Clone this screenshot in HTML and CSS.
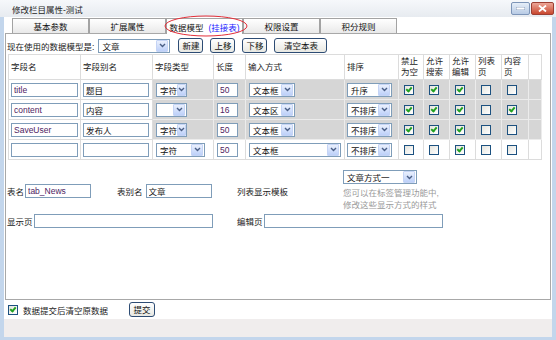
FILE: index.html
```html
<!doctype html>
<html lang="zh">
  <head>
    <meta charset="UTF-8" />
    <title>修改栏目属性-测试</title>
    <link rel="stylesheet" href="styles.css">
  </head>
  <body>
    <div class="window">
      <div class="titlebar">
        <span class="title">修改栏目属性-测试</span>
        <div class="win-btns">
          <span class="win-min"><svg width="9" height="3" viewBox="0 0 9 3"><rect x="0" y="0" width="9" height="3" fill="#fff" stroke="#56709a" stroke-width="0.6"/></svg></span>
          <span class="win-close"><svg width="9" height="7" viewBox="0 0 9 7"><path d="M1 0.5 L8 6.5 M8 0.5 L1 6.5" stroke="#fff" stroke-width="1.8"/></svg></span>
        </div>
      </div>

      <div class="client">
        <div class="tabs">
          <span class="tab">基本参数</span>
          <span class="tab">扩展属性</span>
          <span class="tab active">数据模型 <span class="tab-link">(挂接表)</span>
            <svg class="ring" width="84" height="22" viewBox="0 0 84 22"><ellipse cx="42" cy="11" rx="41" ry="10" fill="none" stroke="#e3303a" stroke-width="1"/></svg>
          </span>
          <span class="tab">权限设置</span>
          <span class="tab">积分规则</span>
        </div>

        <div class="panel">
          <div class="toolbar">
            <span>现在使用的数据模型是:</span>
            <span class="sel sel-model">文章<span class="sel-btn"><svg width="7" height="5" viewBox="0 0 7 5"><path d="M1 1 L3.5 3.5 L6 1" fill="none" stroke="#4a5f86" stroke-width="1.4"/></svg></span></span>
            <button class="btn">新建</button>
            <button class="btn">上移</button>
            <button class="btn">下移</button>
            <button class="btn btn-wide">清空本表</button>
          </div>

          <table class="fields">
            <colgroup>
              <col style="width:72px"><col style="width:72px"><col style="width:61px"><col style="width:32px">
              <col style="width:99px"><col style="width:54px"><col style="width:25px"><col style="width:26px">
              <col style="width:26px"><col style="width:26px"><col style="width:27px"><col style="width:13px">
            </colgroup>
            <tr class="head">
              <td>字段名</td><td>字段别名</td><td>字段类型</td><td>长度</td><td>输入方式</td><td>排序</td>
              <td>禁止<br>为空</td><td>允许<br>搜索</td><td>允许<br>编辑</td><td>列表<br>页</td><td>内容<br>页</td><td></td>
            </tr>
            <tr class="fill">
              <td><input class="txt w-name" value="title"></td>
              <td><input class="txt w-alias cjk" value="题目"></td>
              <td><span class="sel w-type">字符<span class="sel-btn"><svg width="7" height="5" viewBox="0 0 7 5"><path d="M1 1 L3.5 3.5 L6 1" fill="none" stroke="#4a5f86" stroke-width="1.4"/></svg></span></span></td>
              <td><input class="txt w-len" value="50"></td>
              <td><span class="sel w-input">文本框<span class="sel-btn"><svg width="7" height="5" viewBox="0 0 7 5"><path d="M1 1 L3.5 3.5 L6 1" fill="none" stroke="#4a5f86" stroke-width="1.4"/></svg></span></span></td>
              <td><span class="sel w-sort">升序<span class="sel-btn"><svg width="7" height="5" viewBox="0 0 7 5"><path d="M1 1 L3.5 3.5 L6 1" fill="none" stroke="#4a5f86" stroke-width="1.4"/></svg></span></span></td>
              <td><span class="chk on"></span></td><td><span class="chk on"></span></td><td><span class="chk on"></span></td>
              <td><span class="chk"></span></td><td><span class="chk"></span></td><td></td>
            </tr>
            <tr class="fill">
              <td><input class="txt w-name" value="content"></td>
              <td><input class="txt w-alias cjk" value="内容"></td>
              <td><span class="sel w-type"><span class="sel-btn"><svg width="7" height="5" viewBox="0 0 7 5"><path d="M1 1 L3.5 3.5 L6 1" fill="none" stroke="#4a5f86" stroke-width="1.4"/></svg></span></span></td>
              <td><input class="txt w-len" value="16"></td>
              <td><span class="sel w-input">文本区<span class="sel-btn"><svg width="7" height="5" viewBox="0 0 7 5"><path d="M1 1 L3.5 3.5 L6 1" fill="none" stroke="#4a5f86" stroke-width="1.4"/></svg></span></span></td>
              <td><span class="sel w-sort">不排序<span class="sel-btn"><svg width="7" height="5" viewBox="0 0 7 5"><path d="M1 1 L3.5 3.5 L6 1" fill="none" stroke="#4a5f86" stroke-width="1.4"/></svg></span></span></td>
              <td><span class="chk on"></span></td><td><span class="chk on"></span></td><td><span class="chk on"></span></td>
              <td><span class="chk"></span></td><td><span class="chk on"></span></td><td></td>
            </tr>
            <tr class="fill">
              <td><input class="txt w-name" value="SaveUser"></td>
              <td><input class="txt w-alias cjk" value="发布人"></td>
              <td><span class="sel w-type">字符<span class="sel-btn"><svg width="7" height="5" viewBox="0 0 7 5"><path d="M1 1 L3.5 3.5 L6 1" fill="none" stroke="#4a5f86" stroke-width="1.4"/></svg></span></span></td>
              <td><input class="txt w-len" value="50"></td>
              <td><span class="sel w-input">文本框<span class="sel-btn"><svg width="7" height="5" viewBox="0 0 7 5"><path d="M1 1 L3.5 3.5 L6 1" fill="none" stroke="#4a5f86" stroke-width="1.4"/></svg></span></span></td>
              <td><span class="sel w-sort">不排序<span class="sel-btn"><svg width="7" height="5" viewBox="0 0 7 5"><path d="M1 1 L3.5 3.5 L6 1" fill="none" stroke="#4a5f86" stroke-width="1.4"/></svg></span></span></td>
              <td><span class="chk on"></span></td><td><span class="chk on"></span></td><td><span class="chk on"></span></td>
              <td><span class="chk"></span></td><td><span class="chk"></span></td><td></td>
            </tr>
            <tr>
              <td><input class="txt w-name" value=""></td>
              <td><input class="txt w-alias" value=""></td>
              <td><span class="sel w-type-wide">字符<span class="sel-btn"><svg width="7" height="5" viewBox="0 0 7 5"><path d="M1 1 L3.5 3.5 L6 1" fill="none" stroke="#4a5f86" stroke-width="1.4"/></svg></span></span></td>
              <td><input class="txt w-len" value="50"></td>
              <td><span class="sel w-input-wide">文本框<span class="sel-btn"><svg width="7" height="5" viewBox="0 0 7 5"><path d="M1 1 L3.5 3.5 L6 1" fill="none" stroke="#4a5f86" stroke-width="1.4"/></svg></span></span></td>
              <td><span class="sel w-sort">不排序<span class="sel-btn"><svg width="7" height="5" viewBox="0 0 7 5"><path d="M1 1 L3.5 3.5 L6 1" fill="none" stroke="#4a5f86" stroke-width="1.4"/></svg></span></span></td>
              <td><span class="chk"></span></td><td><span class="chk"></span></td><td><span class="chk on"></span></td>
              <td><span class="chk"></span></td><td><span class="chk"></span></td><td></td>
            </tr>
          </table>

          <div class="meta">
            <div class="meta-row row-a">
              <div class="cell-a">
                <span>表名</span><input class="txt w-tbl" value="tab_News">
                <span class="lbl-alias">表别名</span><input class="txt w-tbl cjk" value="文章">
              </div>
              <div class="cell-b">列表显示模板</div>
              <div class="cell-c">
                <span class="sel w-tpl">文章方式一<span class="sel-btn"><svg width="7" height="5" viewBox="0 0 7 5"><path d="M1 1 L3.5 3.5 L6 1" fill="none" stroke="#4a5f86" stroke-width="1.4"/></svg></span></span>
                <div class="hint">您可以在标签管理功能中,<br>修改这些显示方式的样式</div>
              </div>
            </div>
            <div class="meta-row row-b">
              <div class="cell-a"><span>显示页</span><input class="txt w-page" value=""></div>
              <div class="cell-edit"><span>编辑页</span><input class="txt w-page" value=""></div>
            </div>
          </div>
        </div>

        <div class="footer">
          <span class="chk on"></span>
          <span class="footer-text">数据提交后清空原数据</span>
          <button class="btn btn-submit">提交</button>
        </div>
      </div>
      <div class="statusbar"></div>
    </div>
  </body>
</html>
```

FILE: styles.css
```css
body {
  margin: 0;
  font-family: "Liberation Sans", "Noto Sans CJK SC", sans-serif;
  font-size: 8.5px;
  color: #1a1a1a;
}

.window {
  width: 556px;
  height: 340px;
  background-color: #c3d6ec;
  display: flex;
  flex-direction: column;
}

/* title bar */
.titlebar {
  height: 17px;
  flex: none;
  display: flex;
  align-items: center;
  padding-left: 12px;
  background: linear-gradient(#f6f8fb, #e7ebf0);
}

.title {
  color: #1e1e1e;
}

.win-btns {
  margin-left: auto;
  margin-right: 2px;
  display: flex;
  gap: 1px;
}

.win-min,
.win-close {
  height: 11px;
  border-radius: 2px;
  display: flex;
  align-items: center;
  justify-content: center;
}

.win-min {
  width: 17px;
  border: 1px solid #7d95b8;
  background: linear-gradient(#e6eef8, #b8cbe5);
}

.win-close {
  width: 21px;
  border: 1px solid #9c3f33;
  background: linear-gradient(#eca597, #c9482f);
}

/* client area */
.client {
  margin: 0 4px;
  height: 302px;
  flex: none;
  background-color: #fff;
  display: flex;
  flex-direction: column;
}

.tabs {
  height: 16px;
  flex: none;
  display: flex;
  align-items: flex-end;
  padding-left: 8px;
  position: relative;
  z-index: 1;
}

.tab {
  width: 77px;
  height: 15px;
  box-sizing: border-box;
  border: 1px solid #a3a3a3;
  border-bottom: none;
  background: linear-gradient(#ffffff, #e9e9e9);
  display: flex;
  align-items: center;
  justify-content: center;
  color: #111;
}

.tab.active {
  position: relative;
  height: 16px;
  margin-bottom: -1px;
  background: #fff;
  gap: 5px;
}

.tab-link {
  color: #1a1aff;
}

.ring {
  position: absolute;
  left: -3px;
  top: -4px;
}

.panel {
  margin-left: 1px;
  width: 546px;
  height: 267px;
  flex: none;
  box-sizing: border-box;
  border: 1px solid #a8a8a8;
  padding: 4px 1px 0;
}

.toolbar {
  height: 15px;
  display: flex;
  align-items: center;
}

.sel-model {
  width: 72px;
  margin-left: 4px;
}

.toolbar .btn {
  margin-left: 7px;
}

.toolbar .sel-model + .btn {
  margin-left: 8px;
}

/* form controls */
.btn {
  font: inherit;
  height: 15px;
  min-width: 24px;
  box-sizing: border-box;
  padding: 0 3px;
  border: 1px solid #2d4c74;
  border-radius: 3px;
  background: linear-gradient(#ffffff, #e8e8e2);
  color: #111;
  line-height: 12px;
}

.btn-wide {
  width: 53px;
}

.sel {
  display: inline-flex;
  align-items: center;
  box-sizing: border-box;
  height: 14px;
  padding-left: 3px;
  border: 1px solid #7f9db9;
  background-color: #fff;
  color: #111;
  vertical-align: middle;
}

.sel-btn {
  margin-left: auto;
  width: 10px;
  height: 10px;
  margin-right: 1px;
  border: 1px solid #c5d4f5;
  border-radius: 1px;
  background: linear-gradient(#eaf0fd, #bdd0f9);
  display: flex;
  align-items: center;
  justify-content: center;
}

.txt {
  font: inherit;
  height: 14px;
  box-sizing: border-box;
  border: 1px solid #7f9db9;
  padding: 0 2px;
  color: #4f2463;
  vertical-align: middle;
}

.txt.cjk {
  color: #111;
}

.chk {
  display: inline-block;
  width: 10px;
  height: 10px;
  box-sizing: border-box;
  border: 1px solid #1c5180;
  background: linear-gradient(135deg, #e4e4de, #ffffff);
  vertical-align: middle;
  position: relative;
}

.chk.on::after {
  content: "";
  position: absolute;
  left: 2px;
  top: 0px;
  width: 2px;
  height: 4px;
  border: solid #21a121;
  border-width: 0 2px 2px 0;
  transform: rotate(40deg);
}

/* field table */
.fields {
  border-collapse: collapse;
  table-layout: fixed;
  width: 533px;
  margin-top: 1px;
  margin-left: 1px;
}

.fields td {
  border: 1px solid #dcdcdc;
  padding: 0 0 0 2px;
  height: 19px;
  white-space: nowrap;
  overflow: hidden;
}

.fields td:nth-child(n+3) {
  padding-left: 3px;
}

.fields td:nth-child(n+6) {
  padding-left: 2px;
}

.fields td:nth-child(n+7) {
  padding-left: 5px;
}

.fields .head td {
  height: 24px;
  line-height: 11px;
  color: #222;
  padding-left: 2px;
}

.fields .fill td {
  background-color: #d6d6d6;
  border-color: #ececec;
}

.fields .fill td:nth-child(1),
.fields .fill td:nth-child(2) {
  background-color: #fff;
  border-color: #dcdcdc;
}

.w-name { width: 67px; }
.w-alias { width: 66px; }
.w-type { width: 31px; }
.w-type-wide { width: 49px; }
.w-len { width: 21px; }
.w-input { width: 46px; }
.w-input-wide { width: 92px; }
.w-sort { width: 45px; }

/* table meta */
.meta {
  margin-top: 10px;
}

.meta-row {
  display: flex;
  align-items: center;
}

.cell-a {
  width: 230px;
  display: flex;
  align-items: center;
  gap: 1px;
}

.lbl-alias {
  margin-left: 25px;
  margin-right: 2px;
}

.w-tbl {
  width: 66px;
}

.cell-b {
  width: 106px;
}

.w-tpl {
  width: 74px;
}

.hint {
  margin-top: 3px;
  color: #9a9a9a;
  line-height: 12px;
}

.row-b {
  margin-top: 3px;
}

.w-page {
  width: 179px;
}

.cell-edit {
  display: flex;
  align-items: center;
  gap: 1px;
}

/* footer */
.footer {
  flex: 1;
  display: flex;
  align-items: center;
  padding-left: 4px;
}

.footer-text {
  margin-left: 5px;
}

.btn-submit {
  margin-left: 21px;
  width: 26px;
}

.statusbar {
  margin: 0 4px;
  height: 18px;
  flex: none;
  background-color: #f0eded;
}
```
